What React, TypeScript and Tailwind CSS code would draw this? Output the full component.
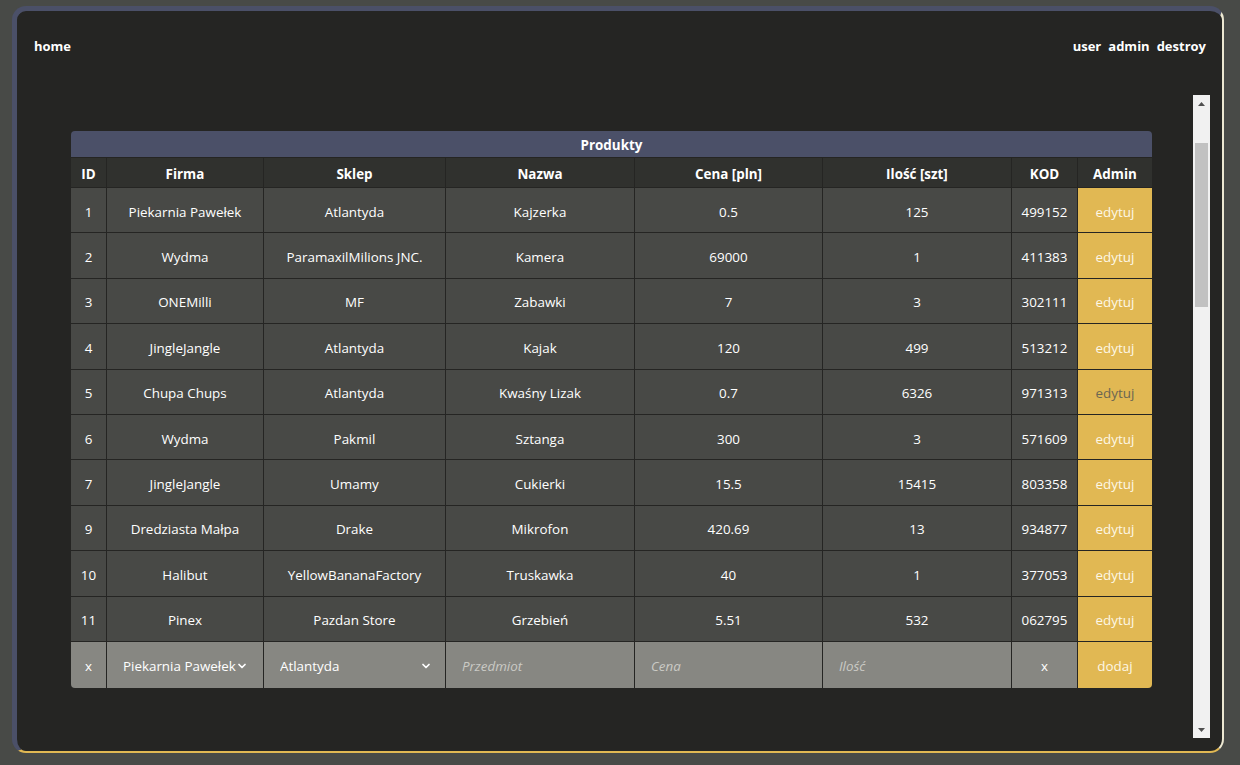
import { ChevronDown } from 'lucide-react';

const products = [
  { id: 1, firma: 'Piekarnia Pawełek', sklep: 'Atlantyda', nazwa: 'Kajzerka', cena: '0.5', ilosc: '125', kod: '499152' },
  { id: 2, firma: 'Wydma', sklep: 'ParamaxilMilions JNC.', nazwa: 'Kamera', cena: '69000', ilosc: '1', kod: '411383' },
  { id: 3, firma: 'ONEMilli', sklep: 'MF', nazwa: 'Zabawki', cena: '7', ilosc: '3', kod: '302111' },
  { id: 4, firma: 'JingleJangle', sklep: 'Atlantyda', nazwa: 'Kajak', cena: '120', ilosc: '499', kod: '513212' },
  { id: 5, firma: 'Chupa Chups', sklep: 'Atlantyda', nazwa: 'Kwaśny Lizak', cena: '0.7', ilosc: '6326', kod: '971313' },
  { id: 6, firma: 'Wydma', sklep: 'Pakmil', nazwa: 'Sztanga', cena: '300', ilosc: '3', kod: '571609' },
  { id: 7, firma: 'JingleJangle', sklep: 'Umamy', nazwa: 'Cukierki', cena: '15.5', ilosc: '15415', kod: '803358' },
  { id: 9, firma: 'Dredziasta Małpa', sklep: 'Drake', nazwa: 'Mikrofon', cena: '420.69', ilosc: '13', kod: '934877' },
  { id: 10, firma: 'Halibut', sklep: 'YellowBananaFactory', nazwa: 'Truskawka', cena: '40', ilosc: '1', kod: '377053' },
  { id: 11, firma: 'Pinex', sklep: 'Pazdan Store', nazwa: 'Grzebień', cena: '5.51', ilosc: '532', kod: '062795' },
];

const headers = ['ID', 'Firma', 'Sklep', 'Nazwa', 'Cena [pln]', 'Ilość [szt]', 'KOD', 'Admin'];

function Scrollbar() {
  return (
    <div className="flex w-[17px] shrink-0 flex-col bg-[#f1f1f1]">
      <div className="flex h-[17px] items-center justify-center">
        <svg width="7" height="4" viewBox="0 0 7 4">
          <polygon points="3.5,0 7,4 0,4" fill="#505050" />
        </svg>
      </div>
      <div className="mx-[2px] mt-[31px] h-[164px] bg-[#c1c1c1]" />
      <div className="flex-1" />
      <div className="flex h-[17px] items-center justify-center">
        <svg width="7" height="4" viewBox="0 0 7 4">
          <polygon points="0,0 7,0 3.5,4" fill="#505050" />
        </svg>
      </div>
    </div>
  );
}

export default function App() {
  const cell = 'h-[45.4px] border-r border-b border-[#252523] bg-[#484946] pt-[3px] text-center text-white';
  const addCell = 'h-[46px] border-r border-[#252523] bg-[#878782] p-0';
  const input = 'h-[46px] w-full bg-transparent px-4 pt-[3px] italic text-white outline-none placeholder:text-[#cacac5]';

  return (
    <div className="h-[765px] overflow-hidden bg-[#484a47] pl-3 pt-[6px] font-['Open_Sans',sans-serif] text-[13.4px]">
      <div className="flex h-[747px] w-[1212px] flex-col rounded-[14px] border-t-[5px] border-l-[5px] border-r-2 border-b-2 border-t-[#4b5068] border-l-[#4b5068] border-r-[#ece8d2] border-b-[#e1b853] bg-[#252523]">
        <nav className="flex h-[84px] items-start justify-between pl-[17px] pr-[16px] pt-[26px] text-[13px] font-bold text-white">
          <a>home</a>
          <div className="flex gap-[7px]">
            <a>user</a>
            <a>admin</a>
            <a>destroy</a>
          </div>
        </nav>

        <div className="ml-[13px] mr-[12px] flex h-[643px]">
          <div className="flex-1 overflow-hidden pt-[36px]">
            <table className="mx-auto w-[1081px] table-fixed border-separate border-spacing-0">
              <colgroup>
                <col className="w-[36px]" />
                <col className="w-[157px]" />
                <col className="w-[182px]" />
                <col className="w-[189px]" />
                <col className="w-[188px]" />
                <col className="w-[189px]" />
                <col className="w-[66px]" />
                <col className="w-[74px]" />
              </colgroup>
              <thead>
                <tr>
                  <th colSpan={8} className="h-[27px] rounded-t-[4px] border-b border-[#252523] bg-[#4b5068] pt-[3px] font-bold text-white">
                    Produkty
                  </th>
                </tr>
                <tr>
                  {headers.map((h, i) => (
                    <th
                      key={h}
                      className={`h-[30px] border-b border-[#252523] bg-[#30312e] pt-[4px] font-bold text-white ${i < 7 ? 'border-r' : ''}`}
                    >
                      {h}
                    </th>
                  ))}
                </tr>
              </thead>
              <tbody>
                {products.map((p) => (
                  <tr key={p.id}>
                    <td className={cell}>{p.id}</td>
                    <td className={cell}>{p.firma}</td>
                    <td className={cell}>{p.sklep}</td>
                    <td className={cell}>{p.nazwa}</td>
                    <td className={cell}>{p.cena}</td>
                    <td className={cell}>{p.ilosc}</td>
                    <td className={cell}>{p.kod}</td>
                    <td className="h-[45.4px] border-b border-[#252523] bg-[#e1b853] pt-[3px] text-center">
                      <button className={p.id === 5 ? 'text-[#6b6652]' : 'text-[#fdf7e6]'}>edytuj</button>
                    </td>
                  </tr>
                ))}
                <tr>
                  <td className="h-[46px] rounded-bl-[4px] border-r border-[#252523] bg-[#878782] pt-[3px] text-center text-white">x</td>
                  <td className={`relative ${addCell}`}>
                    <select className="h-[46px] w-full appearance-none bg-transparent pl-4 pr-6 pt-[3px] text-white outline-none">
                      <option>Piekarnia Pawełek</option>
                    </select>
                    <ChevronDown size={12} strokeWidth={3.5} className="pointer-events-none absolute right-[15px] top-[18px] text-white" />
                  </td>
                  <td className={`relative ${addCell}`}>
                    <select className="h-[46px] w-full appearance-none bg-transparent pl-4 pr-8 pt-[3px] text-white outline-none">
                      <option>Atlantyda</option>
                    </select>
                    <ChevronDown size={12} strokeWidth={3.5} className="pointer-events-none absolute right-[13px] top-[18px] text-white" />
                  </td>
                  <td className={addCell}>
                    <input placeholder="Przedmiot" className={input} />
                  </td>
                  <td className={addCell}>
                    <input placeholder="Cena" className={input} />
                  </td>
                  <td className={addCell}>
                    <input placeholder="Ilość" className={input} />
                  </td>
                  <td className="h-[46px] border-r border-[#252523] bg-[#878782] pt-[3px] text-center text-white">x</td>
                  <td className="h-[46px] rounded-br-[4px] bg-[#e1b853] pt-[3px] text-center">
                    <button className="text-[#fdf7e6]">dodaj</button>
                  </td>
                </tr>
              </tbody>
            </table>
          </div>
          <Scrollbar />
        </div>
      </div>
    </div>
  );
}
